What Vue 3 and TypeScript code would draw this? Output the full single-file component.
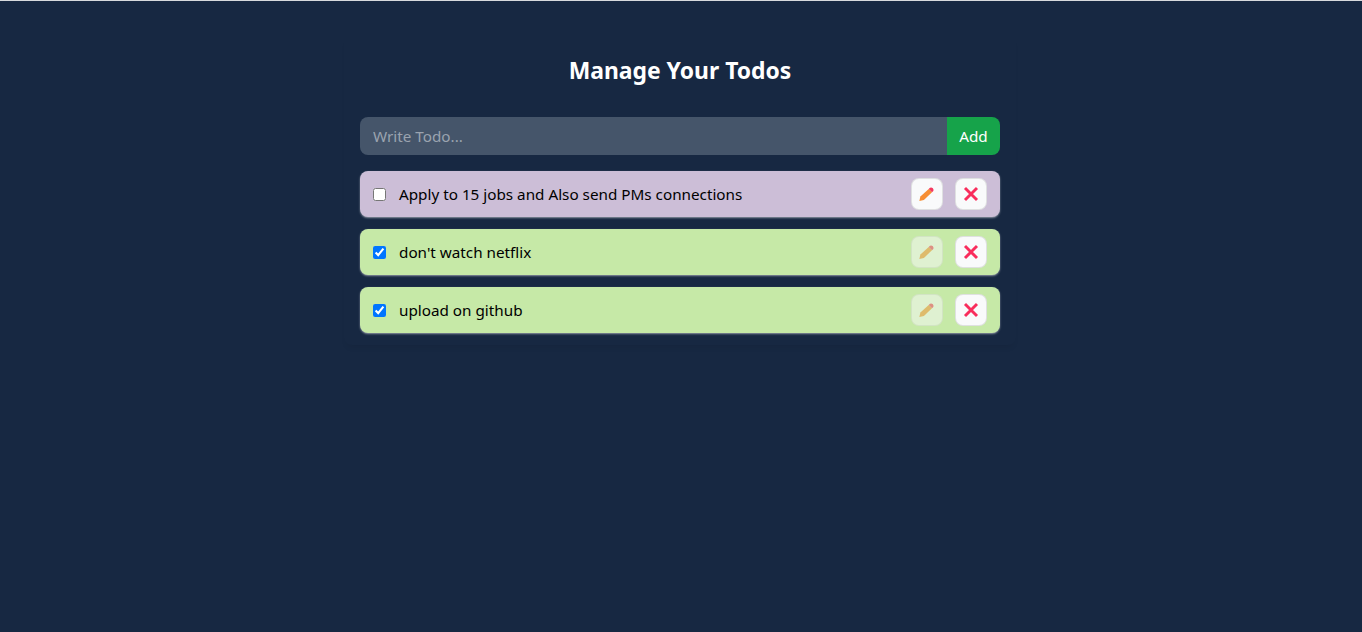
<template>
  <div class="page">
    <div class="container">
      <h1 class="title">Manage Your Todos</h1>
      <form class="todo-form" @submit.prevent="addTodo">
        <input v-model="newTodo" type="text" class="todo-input" placeholder="Write Todo..." />
        <button type="submit" class="add-btn">Add</button>
      </form>
      <div class="todo-list">
        <div v-for="todo in todos" :key="todo.id" class="todo-item" :class="{ done: todo.done }">
          <input v-model="todo.done" type="checkbox" class="todo-check" />
          <span class="todo-text">{{ todo.text }}</span>
          <button class="icon-btn" :disabled="todo.done" aria-label="Edit">
            <svg width="16" height="16" viewBox="0 0 16 16">
              <path d="M0.3 15 L1.4 10.6 L9.7 2.9 L13 6.3 L4.9 13.9 Z" fill="#f78f33" />
              <path d="M9.7 2.9 L11 1.8 Q12.3 0.9 13.6 2 L14 2.4 Q15.2 3.8 14.1 5.2 L13 6.3 Z" fill="#f4395f" />
            </svg>
          </button>
          <button class="icon-btn" aria-label="Delete">
            <svg width="16" height="16" viewBox="0 0 16 16">
              <path d="M2 2 L14 14 M14 2 L2 14" stroke="#f92c5c" stroke-width="2.9" fill="none" />
            </svg>
          </button>
        </div>
      </div>
    </div>
  </div>
</template>

<script setup lang="ts">
import { ref } from "vue";

interface Todo {
  id: number;
  text: string;
  done: boolean;
}

const newTodo = ref<string>("");
const todos = ref<Todo[]>([
  { id: 1, text: "Apply to 15 jobs and Also send PMs connections", done: false },
  { id: 2, text: "don't watch netflix", done: true },
  { id: 3, text: "upload on github", done: true },
]);

const addTodo = () => {
  if (!newTodo.value.trim()) return;
  todos.value.push({ id: Date.now(), text: newTodo.value, done: false });
  newTodo.value = "";
};
</script>

<style>
html,
body {
  margin: 0;
  background: #172842;
}
</style>

<style scoped>
.page {
  min-height: 632px;
  box-sizing: border-box;
  background: #172842;
  border-top: 1px solid #d8dadd;
  padding: 34px 2px 0 0;
  font-family: "Noto Sans", "Open Sans", sans-serif;
  font-size: 15.25px;
  color: #fff;
}
.container {
  width: 640px;
  margin: 0 auto;
  padding: 12px 16px;
  border-radius: 8px;
  box-shadow: 0 5px 6px -3px rgba(0, 0, 0, 0.08);
}
.title {
  margin: 8px 0 30px;
  font-size: 22.9px;
  line-height: 32px;
  font-weight: 700;
  text-align: center;
}
.todo-form {
  display: flex;
  margin-bottom: 16px;
}
.todo-input {
  flex: 1;
  min-width: 0;
  height: 38px;
  box-sizing: border-box;
  padding: 0 13px;
  border: 0;
  outline: none;
  border-radius: 8px 0 0 8px;
  background: #45556a;
  color: #fff;
  font: inherit;
}
.todo-input::placeholder {
  color: #9aa3af;
}
.add-btn {
  width: 53px;
  height: 38px;
  padding: 0;
  border: 0;
  border-radius: 0 8px 8px 0;
  background: #16a34a;
  color: #fff;
  font: inherit;
}
.todo-list {
  display: flex;
  flex-direction: column;
  gap: 12px;
}
.todo-item {
  display: flex;
  align-items: center;
  gap: 13px;
  height: 46px;
  box-sizing: border-box;
  padding: 0 13px;
  border-radius: 8px;
  background: #ccbed7;
  color: #000;
  box-shadow: 0 1px 2px rgba(255, 255, 255, 0.5);
}
.todo-item.done {
  background: #c6e9a7;
}
.todo-check {
  width: 13px;
  height: 13px;
  margin: 0;
}
.todo-text {
  flex: 1;
}
.icon-btn {
  display: flex;
  align-items: center;
  justify-content: center;
  width: 32px;
  height: 32px;
  padding: 0;
  border: 1px solid rgba(0, 0, 0, 0.1);
  border-radius: 8px;
  background: #f9fafb;
}
.icon-btn:disabled {
  opacity: 0.5;
}
.icon-btn + .icon-btn {
  margin-left: -1px;
}
</style>
